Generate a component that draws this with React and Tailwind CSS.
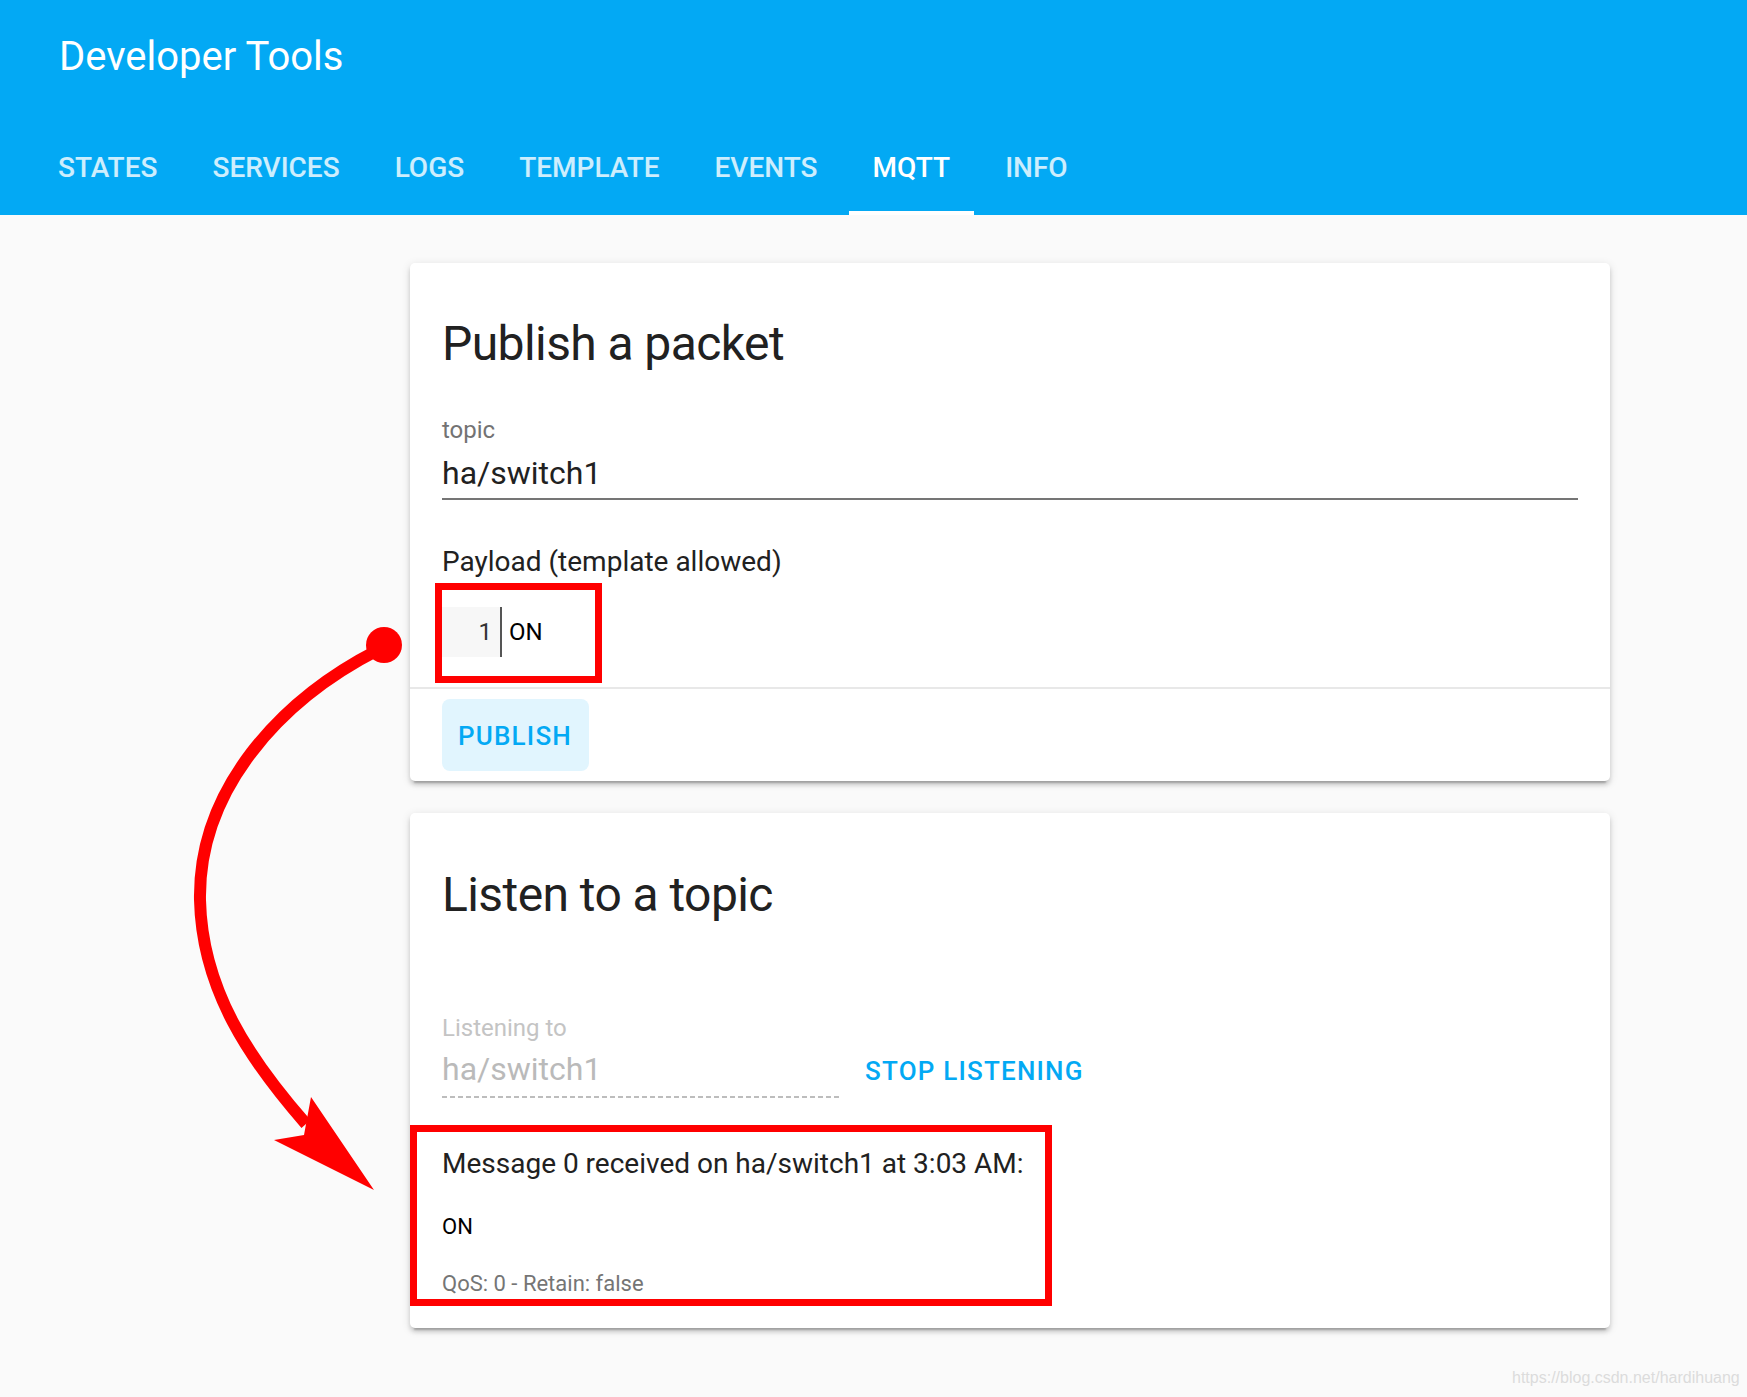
import React from "react";

const TABS = ["STATES", "SERVICES", "LOGS", "TEMPLATE", "EVENTS", "MQTT", "INFO"];

function Header() {
  return (
    <div className="bg-[#03a9f4] text-white">
      <div className="pl-[59px] pt-[33px] text-[40px] leading-[48px]">Developer Tools</div>
      <div className="mt-[38px] flex h-[96px] gap-[7px] pl-[34px] pt-[2px]">
        {TABS.map((t) => (
          <div
            key={t}
            className={
              t === "MQTT"
                ? "relative flex items-center px-6 text-[28px] font-medium text-white"
                : "relative flex items-center px-6 text-[28px] font-medium text-white/80"
            }
          >
            {t}
            {t === "MQTT" && <div className="absolute bottom-0 left-0 right-0 h-[4px] bg-white" />}
          </div>
        ))}
      </div>
    </div>
  );
}

const cardCls =
  "w-[1200px] rounded-[5px] bg-white shadow-[0_4px_4px_0_rgba(0,0,0,0.14),0_2px_10px_0_rgba(0,0,0,0.12),0_6px_2px_-4px_rgba(0,0,0,0.2)]";

function PublishCard() {
  return (
    <div className={cardCls}>
      <div className="px-8 pt-[53px] text-[48px] leading-[56px] tracking-[-0.58px] text-[#212121]">
        Publish a packet
      </div>
      <div className="px-8">
        <div className="mt-[42px] text-[24px] leading-[32px] text-[#737373]">topic</div>
        <div className="mt-[7px] border-b-2 border-[#757575] pb-[5px] text-[32px] leading-[40px] text-[#212121]">
          ha/switch1
        </div>
        <div className="mt-[44px] text-[28px] leading-[36px] text-[#212121]">Payload (template allowed)</div>
        <div className="-ml-[7px] mt-[3px] mb-[4px] w-[167px] border-[7px] border-[#ff0000] pt-[17px] pb-[19px]">
          <div className="flex h-[50px] items-stretch">
            <div className="flex w-[58px] items-center justify-end bg-[#f7f7f7] pr-[8px] text-[24px] text-[#333]">1</div>
            <div className="w-[2px] bg-[#555]" />
            <div className="ml-[7px] flex items-center text-[24px] text-black">ON</div>
          </div>
        </div>
      </div>
      <div className="h-[2px] bg-[#e8e8e8]" />
      <div className="px-8 py-[10px]">
        <button className="flex h-[72px] w-[147px] items-center rounded-[8px] bg-[#e1f5fe] px-4 pt-[2px] text-[26px] font-medium tracking-[1.2px] text-[#03a9f4]">
          PUBLISH
        </button>
      </div>
    </div>
  );
}

function ListenCard() {
  return (
    <div className={cardCls + " mt-8 pb-[22px]"}>
      <div className="px-8 pt-[54px] text-[48px] leading-[56px] tracking-[-0.58px] text-[#212121]">
        Listen to a topic
      </div>
      <div className="px-8">
        <div className="mt-[89px] flex items-start">
          <div className="w-[400px]">
            <div className="text-[24px] leading-[32px] text-[#c4c4c4]">Listening to</div>
            <div className="mt-[5px] pb-[7px] text-[32px] leading-[40px] text-[#bababa]">ha/switch1</div>
            <div className="h-[2px] bg-[linear-gradient(to_right,#bdbdbd_62%,transparent_0)] bg-[length:8px_2px]" />
          </div>
          <button className="ml-[7px] mt-[23px] flex h-[72px] items-center px-4 text-[26px] font-medium tracking-[1.2px] text-[#03a9f4]">
            STOP LISTENING
          </button>
        </div>
        <div className="-ml-8 mt-[18px] w-[642px] border-[7px] border-[#ff0000] pl-[25px] pt-[14px]">
          <div className="text-[28px] leading-[36px] text-[#212121]">Message 0 received on ha/switch1 at 3:03 AM:</div>
          <div className="mt-[30px] text-[22px] leading-[30px] text-black">ON</div>
          <div className="mt-[27px] text-[22px] leading-[30px] text-[#757575]">QoS: 0 - Retain: false</div>
        </div>
      </div>
    </div>
  );
}

function Arrow() {
  return (
    <svg className="pointer-events-none absolute left-0 top-0" width="1747" height="1397" viewBox="0 0 1747 1397">
      <path
        d="M 378 650 C 280 700, 198 790, 200 900 C 202 990, 250 1060, 306 1124"
        fill="none"
        stroke="#ff0000"
        strokeWidth="12"
      />
      <circle cx="384" cy="645" r="18" fill="#ff0000" />
      <polygon points="274,1140 304,1135 311,1097 374,1190" fill="#ff0000" />
    </svg>
  );
}

export default function App() {
  return (
    <div className="relative h-[1397px] overflow-hidden bg-[#fafafa] font-['Roboto',sans-serif]">
      <Header />
      <div className="pl-[410px] pt-[48px]">
        <PublishCard />
        <ListenCard />
      </div>
      <Arrow />
      <div className="absolute left-[1512px] top-[1369px] font-['Liberation_Sans',sans-serif] text-[16px] leading-[18px] text-[#dcdcdc]">
        https://blog.csdn.net/hardihuang
      </div>
    </div>
  );
}
